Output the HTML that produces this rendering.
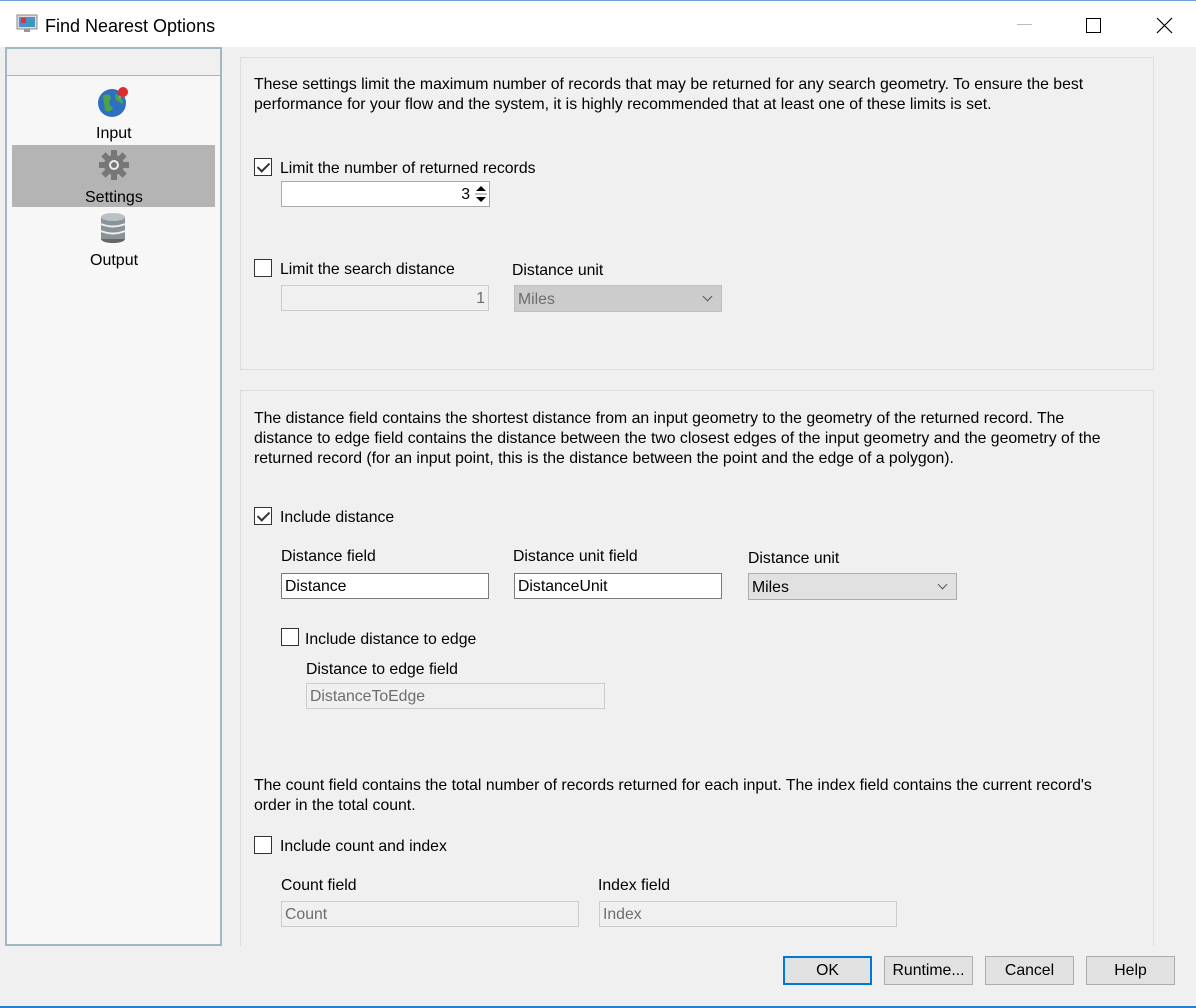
<!DOCTYPE html>
<html><head><style>
*{box-sizing:border-box}
body{margin:0;width:1196px;height:1008px;background:#f0f0f0;font-family:"Liberation Sans",sans-serif;font-size:15.8px;color:#000;position:relative;overflow:hidden}
.a{position:absolute;white-space:nowrap}
.t{position:absolute;white-space:nowrap;margin-top:2px}
.tb{position:absolute;left:0;top:0;width:1196px;height:47px;background:#fff;border-top:1px solid #6fa0d8}
.cb{position:absolute;width:18px;height:18px;border:1px solid #333;background:#fff}
.cb.c::after{content:"";position:absolute;left:5px;top:1px;width:5px;height:10px;border:solid #333;border-width:0 2px 2px 0;transform:rotate(45deg)}
.in{position:absolute;height:26px;border:1px solid #7a7a7a;background:#fff;padding:4px 3px 2px;line-height:18px}
.dis{border-color:#ccc;background:#f0f0f0;color:#6d6d6d}
.sel{position:absolute;height:27px;border:1px solid #adadad;background:#e1e1e1;padding:5px 3px 3px;line-height:18px}
.sel::after{content:"";position:absolute;right:10px;top:7px;width:6px;height:6px;border:solid #555;border-width:0 1px 1px 0;transform:rotate(45deg)}
.btn{position:absolute;top:956px;width:89px;height:29px;border:1px solid #adadad;background:#e1e1e1;text-align:center;line-height:28px}
.panel{position:absolute;border:1px solid #dcdcdc}
.p{position:absolute;line-height:20px;white-space:nowrap;margin-top:2px}
</style></head><body>
<div class="tb">
<svg class="a" style="left:16px;top:13px" width="22" height="20" viewBox="0 0 22 20"><rect x="1" y="1" width="20" height="14" fill="#ddd" stroke="#888"/><rect x="3" y="3" width="16" height="10" fill="#4a8fd8"/><rect x="5" y="4" width="5" height="5" fill="#d33"/><path d="M11 12 L15 5 L18 12Z" fill="#2a9"/><rect x="8" y="15" width="6" height="3" fill="#999"/></svg>
<div class="a" style="left:45px;top:15px;font-size:18px">Find Nearest Options</div>
<div class="a" style="left:1017px;top:23px;width:15px;height:1px;background:#bbb"></div>
<div class="a" style="left:1086px;top:17px;width:15px;height:15px;border:1px solid #000"></div>
<svg class="a" style="left:1156px;top:16px" width="17" height="17"><path d="M1 1L16 16M16 1L1 16" stroke="#000" stroke-width="1.2"/></svg>
</div>
<div class="a" style="left:5px;top:47px;width:217px;height:899px;border:2px solid #9fb9c0;background:#f7f7f7"></div>
<div class="a" style="left:7px;top:49px;width:213px;height:27px;background:#f0f0f0;border-bottom:1px solid #9fb9c0"></div>
<div class="a" style="left:12px;top:145px;width:203px;height:62px;background:#b4b4b4"></div>
<svg class="a" style="left:97px;top:86px" width="34" height="32"><circle cx="15" cy="17" r="14" fill="#2e6fc0"/><path d="M6 10 Q12 6 14 12 Q10 18 16 22 Q12 28 8 24Z M18 8 Q26 10 26 18 Q22 16 19 14Z" fill="#4da34a"/><line x1="22" y1="12" x2="26" y2="7" stroke="#999" stroke-width="2"/><circle cx="26" cy="6" r="5" fill="#e02a2a"/></svg>
<div class="a" style="left:96px;top:125px;font-size:16px">Input</div>
<svg class="a" style="left:98px;top:150px" width="32" height="30" viewBox="0 0 32 30"><g transform="translate(16 15)" fill="#777"><circle r="10"/><g><rect x="-3" y="-15" width="6" height="30"/><rect x="-15" y="-3" width="30" height="6"/><rect x="-3" y="-15" width="6" height="30" transform="rotate(45)"/><rect x="-3" y="-15" width="6" height="30" transform="rotate(-45)"/></g><circle r="5" fill="#eee"/><circle r="3" fill="#777"/></g></svg>
<div class="a" style="left:85px;top:189px;font-size:16px">Settings</div>
<svg class="a" style="left:99px;top:212px" width="28" height="32"><ellipse cx="14" cy="27" rx="12" ry="4" fill="#666"/><rect x="2" y="5" width="24" height="22" fill="#8a9396"/><path d="M2 12 Q14 17 26 12 M2 19 Q14 24 26 19" stroke="#eee" stroke-width="2" fill="none"/><ellipse cx="14" cy="5" rx="12" ry="4" fill="#b9c2c5"/></svg>
<div class="a" style="left:90px;top:252px;font-size:16px">Output</div>

<div class="panel" style="left:240px;top:57px;width:914px;height:313px"></div>
<div class="p" style="left:254px;top:73px">These settings limit the maximum number of records that may be returned for any search geometry. To ensure the best<br>performance for your flow and the system, it is highly recommended that at least one of these limits is set.</div>
<div class="cb c" style="left:254px;top:158px"></div>
<div class="t" style="left:280px;top:158px">Limit the number of returned records</div>
<div class="in" style="left:281px;top:181px;width:209px;height:26px;border-color:#aaa;text-align:right;padding-right:19px">3</div>
<svg class="a" style="left:474px;top:183px" width="14" height="22"><path d="M2 8L7 3L12 8Z M2 14L7 19L12 14Z" fill="#000"/><line x1="1" y1="11" x2="13" y2="11" stroke="#888"/></svg>
<div class="cb" style="left:254px;top:259px"></div>
<div class="t" style="left:280px;top:259px">Limit the search distance</div>
<div class="t" style="left:512px;top:260px">Distance unit</div>
<div class="in dis" style="left:281px;top:285px;width:208px;text-align:right">1</div>
<div class="sel" style="left:514px;top:285px;width:208px;background:#cccccc;border-color:#bfbfbf;color:#6d6d6d">Miles</div>

<div class="panel" style="left:240px;top:390px;width:914px;height:600px;border-bottom:none"></div>
<div class="a" style="left:221px;top:946px;width:975px;height:62px;background:#f0f0f0"></div>
<div class="p" style="left:254px;top:407px">The distance field contains the shortest distance from an input geometry to the geometry of the returned record. The<br>distance to edge field contains the distance between the two closest edges of the input geometry and the geometry of the<br>returned record (for an input point, this is the distance between the point and the edge of a polygon).</div>
<div class="cb c" style="left:254px;top:507px"></div>
<div class="t" style="left:280px;top:507px">Include distance</div>
<div class="t" style="left:281px;top:546px">Distance field</div>
<div class="t" style="left:513px;top:546px">Distance unit field</div>
<div class="t" style="left:748px;top:548px">Distance unit</div>
<div class="in" style="left:281px;top:573px;width:208px">Distance</div>
<div class="in" style="left:514px;top:573px;width:208px">DistanceUnit</div>
<div class="sel" style="left:748px;top:573px;width:209px">Miles</div>
<div class="cb" style="left:281px;top:628px"></div>
<div class="t" style="left:305px;top:629px">Include distance to edge</div>
<div class="t" style="left:306px;top:659px">Distance to edge field</div>
<div class="in dis" style="left:306px;top:683px;width:299px">DistanceToEdge</div>
<div class="p" style="left:254px;top:774px">The count field contains the total number of records returned for each input. The index field contains the current record's<br>order in the total count.</div>
<div class="cb" style="left:254px;top:836px"></div>
<div class="t" style="left:280px;top:836px">Include count and index</div>
<div class="t" style="left:281px;top:875px">Count field</div>
<div class="t" style="left:598px;top:875px">Index field</div>
<div class="in dis" style="left:281px;top:901px;width:298px">Count</div>
<div class="in dis" style="left:599px;top:901px;width:298px">Index</div>

<div class="btn" style="left:783px;border:2px solid #0078d7;line-height:26px">OK</div>
<div class="btn" style="left:884px">Runtime...</div>
<div class="btn" style="left:985px">Cancel</div>
<div class="btn" style="left:1086px">Help</div>
<div class="a" style="left:0;top:1006px;width:1196px;height:2px;background:#2b7fd0"></div>
</body></html>
